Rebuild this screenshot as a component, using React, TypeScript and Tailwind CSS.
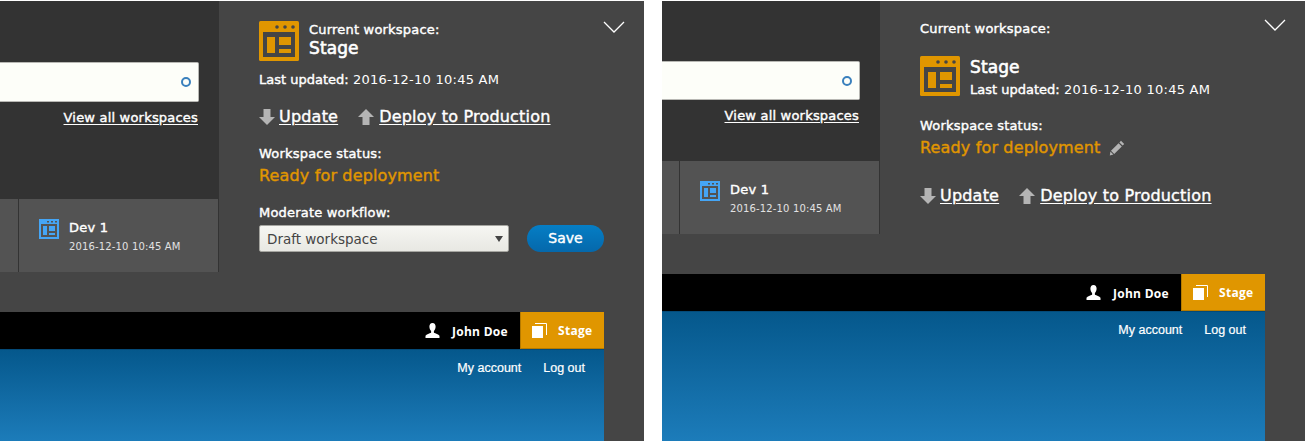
import React from 'react';

const uiFont = "[font-family:'DejaVu_Sans',sans-serif]";
// the reference font is a semi bold, DejaVu only has regular and bold
const semi = '[-webkit-text-stroke:0.4px]';
const label = `text-[13px] leading-[16px] tracking-[0.2px] ${semi}`;
const status = `text-[16px] leading-[22px] tracking-[0.15px] text-[#e09600] ${semi}`;

const WorkspaceIcon = () => (
  <svg viewBox="0 0 40 40" className="h-10 w-10 shrink-0">
    <rect width="40" height="40" rx="1.5" fill="#e09600" />
    <rect x="4" y="11" width="32" height="25" fill="#454545" />
    <circle cx="18" cy="6" r="1.8" fill="#454545" />
    <circle cx="26" cy="6" r="1.8" fill="#454545" />
    <circle cx="34" cy="6" r="1.8" fill="#454545" />
    <rect x="8" y="16" width="8" height="16" fill="#e09600" />
    <rect x="20" y="16" width="12" height="8" fill="#e09600" />
    <rect x="20" y="28" width="12" height="4" fill="#e09600" />
  </svg>
);

const DevIcon = () => (
  <svg viewBox="0 0 20 20" className="h-5 w-5 shrink-0">
    <rect width="20" height="20" fill="#45a5f5" />
    <rect x="2" y="5" width="16" height="13" fill="#535353" />
    <rect x="8" y="2" width="2" height="1.5" fill="#535353" />
    <rect x="12" y="2" width="2" height="1.5" fill="#535353" />
    <rect x="16" y="2" width="2" height="1.5" fill="#535353" />
    <rect x="4" y="7" width="4" height="9" fill="#45a5f5" />
    <rect x="10" y="7" width="6" height="5" fill="#45a5f5" />
    <rect x="10" y="14" width="6" height="2" fill="#45a5f5" />
  </svg>
);

const ArrowDown = () => (
  <svg viewBox="0 0 16 16" className="h-4 w-4 shrink-0">
    <path d="M4.500 0h7v8H16l-8 8-8-8h4.500z" fill="#b4b4b4" />
  </svg>
);

const ArrowUp = () => (
  <svg viewBox="0 0 16 16" className="h-4 w-4 shrink-0">
    <path d="M4.500 16h7V8H16L8 0 0 8h4.500z" fill="#b4b4b4" />
  </svg>
);

const Chevron = ({ top }: { top: string }) => (
  <svg viewBox="0 0 22 12" className={`absolute right-[19px] h-3 w-[22px] ${top}`}>
    <path d="M1 1l10 10L21 1" fill="none" stroke="#fff" strokeWidth="1.300" />
  </svg>
);

const Pencil = () => (
  <svg viewBox="0 0 16 16" className="h-4 w-4 shrink-0">
    <path d="M12 .8l3.200 3.200-1.600 1.600-3.200-3.200zM9.600 3.200l3.200 3.200-7.600 7.600-3.200-3.200zM1.400 11.600l3 3-3.600 1z" fill="#b4b4b4" />
  </svg>
);

const UserIcon = () => (
  <svg viewBox="0 0 15 15" className="h-[15px] w-[15px] shrink-0">
    <path d="M7.500 0C9.600 0 10.600 1.600 10.600 3.600c0 2-.9 3.700-1.700 4.500v1.700c1.600.8 4.600 1.200 5.600 3V15H.5v-2.200c1-1.800 4-2.200 5.600-3V8.100C5.300 7.300 4.400 5.600 4.400 3.600 4.400 1.600 5.400 0 7.500 0z" fill="#fff" />
  </svg>
);

const StackIcon = () => (
  <svg viewBox="0 0 15 15" className="h-[15px] w-[15px] shrink-0">
    <rect x="0" y="3" width="11" height="12" fill="#fff" />
    <path d="M3 .5h11.500V12" fill="none" stroke="#fff" strokeWidth="1" />
  </svg>
);

const ActionLinks = () => (
  <div className={`flex h-6 items-center text-[16px] tracking-[0.2px] text-white ${semi}`}>
    <ArrowDown />
    <a className="ml-1 underline underline-offset-2">Update</a>
    <span className="ml-5"><ArrowUp /></span>
    <a className="ml-[5px] underline underline-offset-2">Deploy to Production</a>
  </div>
);

const LeftColumn = ({ column, inputRow, inputHeight, stub }: { column: string; inputRow: string; inputHeight: string; stub: string }) => (
  <div className={`flex shrink-0 flex-col ${column}`}>
    <div className={`flex flex-1 flex-col items-end bg-[#333333] pr-5 ${inputRow}`}>
      <div className={`flex w-full items-center justify-end rounded-r-[2px] border-y border-r border-[#b8b8b4] bg-[#fdfef9] pr-[7px] ${inputHeight}`}>
        <span className="h-[10px] w-[10px] rounded-full border-2 border-[#3a80bd]" />
      </div>
      <a className={`mt-[7px] mr-px text-[13px] leading-[18px] tracking-[0.2px] text-white underline underline-offset-2 ${semi}`}>View all workspaces</a>
    </div>
    <div className="flex h-[73px] bg-[#535353]">
      <div className={`shrink-0 border-r border-[#333333] ${stub}`} />
      <div className="flex flex-1 gap-[10px] border-r border-[#333333] pt-5 pl-5">
        <DevIcon />
        <div className="text-white">
          <div className={`text-[13px] leading-[18px] tracking-[0.2px] ${semi}`}>Dev 1</div>
          <div className="mt-[3px] text-[10px] leading-[14px] tracking-[0.15px] text-[#e2e2e2]">2016-12-10 10:45 AM</div>
        </div>
      </div>
    </div>
  </div>
);

const UserBar = () => (
  <div className="flex h-[37px] items-stretch justify-end bg-black font-['Open_Sans',sans-serif] text-[12px] font-bold text-white">
    <div className="flex items-center gap-[12px] pr-3">
      <UserIcon />
      <span className="pt-[2px] tracking-[0.3px]">John Doe</span>
    </div>
    <div className="flex w-[84px] items-center gap-[11px] border-b border-l border-[#b57a00] bg-[#e09600] pl-[11px]">
      <StackIcon />
      <span className="pt-[2px] tracking-[0.3px]">Stage</span>
    </div>
  </div>
);

const SiteHeader = () => (
  <div className="mr-10 flex min-h-0 flex-1 flex-col">
    <UserBar />
    <div className="flex flex-1 items-start justify-end gap-[22px] border-t border-[#044a78] bg-gradient-to-b from-[#05588c] to-[#1c7cba] pt-[9px] pr-[19px] font-['Liberation_Sans',sans-serif] text-[12.500px] text-white [-webkit-text-stroke:0.2px]">
      <a>My account</a>
      <a>Log out</a>
    </div>
  </div>
);

const Updated = () => (
  <div className="text-[13px] leading-[16px] tracking-[0.25px]">
    <span className={`tracking-normal ${semi}`}>Last updated:</span> 2016-12-10 10:45 AM
  </div>
);

const FirstPanel = () => (
  <div className={`relative flex h-full w-[644px] shrink-0 flex-col bg-[#454545] ${uiFont}`}>
    <div className="flex">
      <LeftColumn column="h-[271px] w-[219px]" inputRow="pt-[61px]" inputHeight="h-10" stub="w-[19px]" />
      <div className="flex flex-1 flex-col pt-5 pl-10 text-white">
        <div className="flex items-center gap-[10px]">
          <WorkspaceIcon />
          <div className="pb-[2px]">
            <div className={label}>Current workspace:</div>
            <div className="text-[17px] leading-[20px] tracking-[0.1px] [-webkit-text-stroke:0.6px]">Stage</div>
          </div>
        </div>
        <div className="mt-[11px]"><Updated /></div>
        <div className="mt-[17px]"><ActionLinks /></div>
        <div className={`mt-[17px] ${label}`}>Workspace status:</div>
        <div className={`mt-[3px] ${status}`}>Ready for deployment</div>
        <div className={`mt-[18px] ${label}`}>Moderate workflow:</div>
        <div className="mt-[4px] flex items-center gap-[18px]">
          <div className="flex h-[27px] w-[250px] items-center justify-between rounded-[2px] border border-[#a5a5a0] bg-gradient-to-b from-[#f6f6f2] to-[#e8e8e3] pt-px pr-[5px] pl-[7px] text-[13.500px] text-[#444444]">
            <span>Draft workspace</span>
            <span className="h-0 w-0 border-x-[4px] border-t-[6px] border-x-transparent border-t-[#444444]" />
          </div>
          <button className={`h-[27px] w-[77px] rounded-full bg-gradient-to-b from-[#057ec5] to-[#0568ab] text-[14px] text-white ${semi}`}>Save</button>
        </div>
      </div>
    </div>
    <div className="h-[40px]" />
    <SiteHeader />
    <Chevron top="top-5" />
  </div>
);

const SecondPanel = () => (
  <div className={`relative flex h-full flex-1 flex-col bg-[#454545] ${uiFont}`}>
    <div className="flex">
      <LeftColumn column="h-[233px] w-[218px]" inputRow="pt-[60px]" inputHeight="h-[39px]" stub="w-[18px]" />
      <div className="flex flex-1 flex-col pt-5 pl-10 text-white">
        <div className={label}>Current workspace:</div>
        <div className="mt-[19px] flex items-start gap-[10px]">
          <WorkspaceIcon />
          <div>
            <div className="text-[17px] leading-[22px] tracking-[0.1px] [-webkit-text-stroke:0.6px]">Stage</div>
            <div className="mt-[4px]"><Updated /></div>
          </div>
        </div>
        <div className={`mt-[20px] ${label}`}>Workspace status:</div>
        <div className={`mt-[3px] flex items-center gap-2 ${status}`}>
          Ready for deployment
          <Pencil />
        </div>
        <div className="mt-[25px]"><ActionLinks /></div>
      </div>
    </div>
    <div className="h-[40px]" />
    <SiteHeader />
    <Chevron top="top-[18px]" />
  </div>
);

export default function App() {
  return (
    <div className="flex h-[441px] w-[1305px] gap-[18px] overflow-hidden bg-white pt-px">
      <FirstPanel />
      <SecondPanel />
    </div>
  );
}
